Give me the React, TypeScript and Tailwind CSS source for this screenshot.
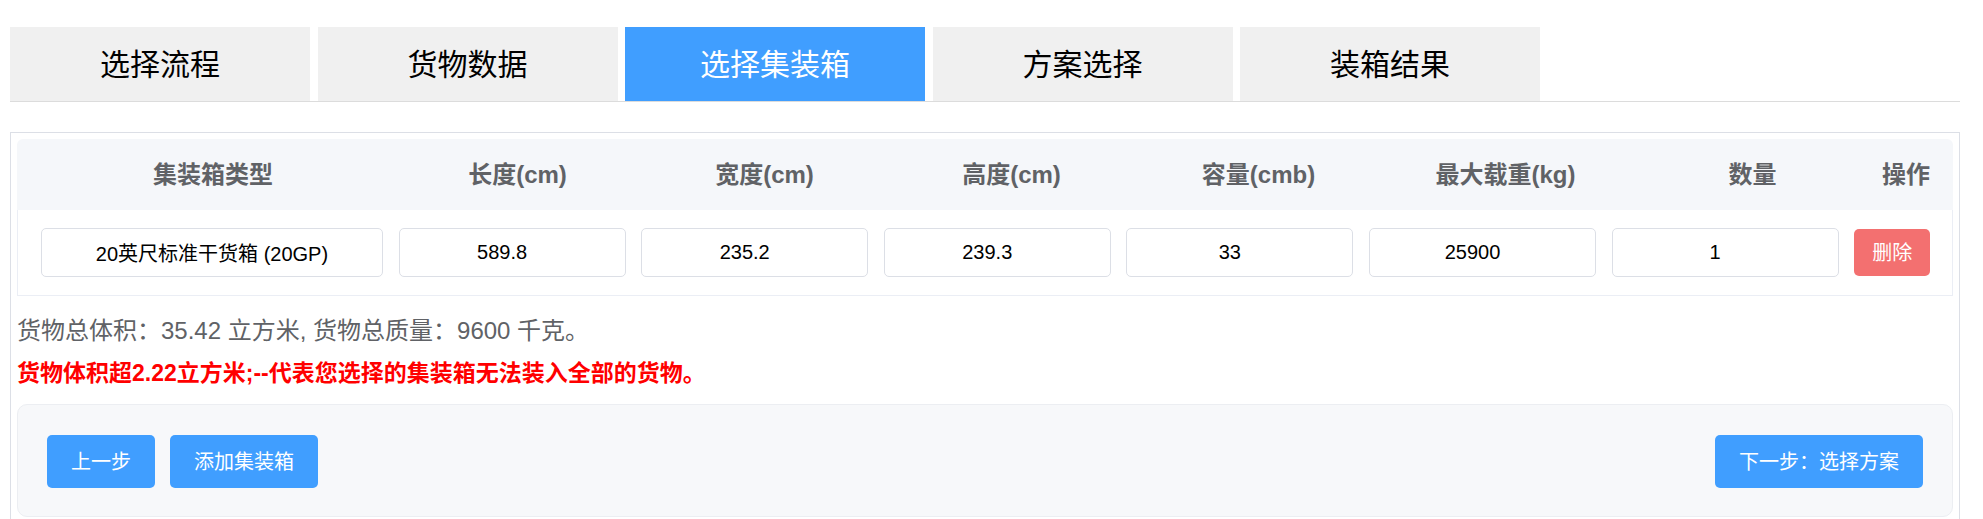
import React from "react";

const tabs = ["选择流程", "货物数据", "选择集装箱", "方案选择", "装箱结果"];
const headers = ["集装箱类型", "长度(cm)", "宽度(cm)", "高度(cm)", "容量(cmb)", "最大载重(kg)", "数量", "操作"];
const numbers = ["589.8", "235.2", "239.3", "33", "25900", "1"];

const BlueButton = ({ label }: { label: string }) => (
  <button className="h-[53px] px-[24px] rounded-[5px] bg-[#409eff] text-white text-[20px] leading-none">
    {label}
  </button>
);

const App = () => {
  return (
    <div className="min-h-screen bg-white pt-[27px] pl-[10px] font-['Liberation_Sans','Noto_Sans_CJK_SC',sans-serif]">
      <div className="w-[1950px]">
        {/* step tabs */}
        <div className="flex gap-[7.5px] border-b border-[#dcdcdc]">
          {tabs.map((t, i) => (
            <div
              key={t}
              className={
                i === 2
                  ? "w-[300px] h-[74px] flex items-center justify-center text-[30px] bg-[#409eff] text-white"
                  : "w-[300px] h-[74px] flex items-center justify-center text-[30px] bg-[#f0f0f0] text-black"
              }
            >
              {t}
            </div>
          ))}
        </div>

        <div className="mt-[30px] border border-[#dcdfe6] px-[6px] pt-[6px] pb-[20px]">
          {/* table header */}
          <div className="grid grid-cols-[362px_repeat(6,247px)_60px] pl-[15px] h-[71px] items-center bg-[#f5f7fa] rounded-t-[6px] text-center text-[24px] font-bold text-[#606266]">
            {headers.map((h) => (
              <div key={h}>{h}</div>
            ))}
          </div>

          {/* table row */}
          <div className="grid grid-cols-[342px_repeat(6,227px)_76px] gap-x-[15.6px] px-[23px] py-[18px] border-x border-b border-[#ebeef5] items-center">
            <input
              readOnly
              value="20英尺标准干货箱 (20GP)"
              className="h-[49px] w-full rounded-[5px] border border-[#dcdfe6] text-center text-[20px] text-black outline-none"
            />
            {numbers.map((n, i) => (
              <input
                key={i}
                readOnly
                value={n}
                className="h-[49px] w-full rounded-[5px] border border-[#dcdfe6] pr-[20px] text-center text-[20px] text-black outline-none"
              />
            ))}
            <button className="h-[47px] w-full rounded-[5px] bg-[#f37070] text-white text-[20px] leading-none">
              删除
            </button>
          </div>

          <div className="mt-[14px] text-[24px] leading-[42px] text-[#606266]">
            货物总体积：35.42 立方米, 货物总质量：9600 千克。
          </div>
          <div className="text-[23px] leading-[42px] font-bold text-[#ff0000]">
            货物体积超2.22立方米;--代表您选择的集装箱无法装入全部的货物。
          </div>

          {/* actions */}
          <div className="mt-[10px] flex items-center justify-between rounded-[10px] border border-[#eceef2] bg-[#f7f8fa] px-[29px] pt-[30px] pb-[28px]">
            <div className="flex gap-[15px]">
              <BlueButton label="上一步" />
              <BlueButton label="添加集装箱" />
            </div>
            <BlueButton label="下一步：选择方案" />
          </div>
        </div>
      </div>
    </div>
  );
};

export default App;
